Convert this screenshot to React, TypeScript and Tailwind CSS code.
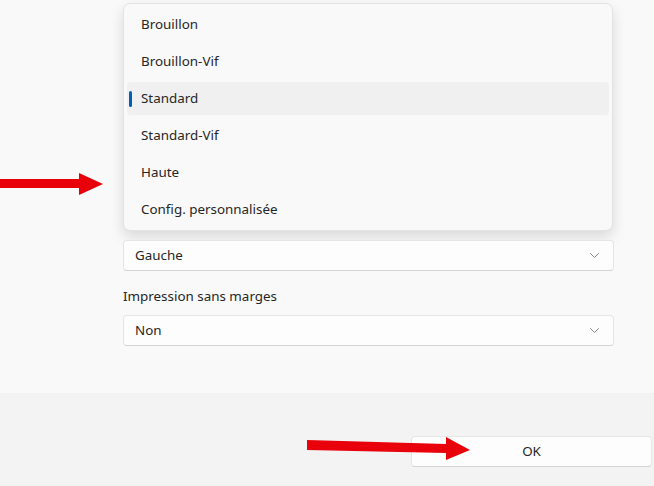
import React from "react";

const qualities = [
  "Brouillon",
  "Brouillon-Vif",
  "Standard",
  "Standard-Vif",
  "Haute",
  "Config. personnalisée",
];

const Chevron = () => (
  <svg width="9" height="5" viewBox="0 0 9 5" fill="none" className="text-[#7a7a7a]">
    <path d="M0.5 0.5l4 4 4-4" stroke="currentColor" strokeWidth="0.9" strokeLinecap="round" strokeLinejoin="round" />
  </svg>
);

const Select = ({ value }: { value: string }) => (
  <div className="flex items-center justify-between h-[31px] pl-[11px] pr-[14px] bg-[#fdfdfd] border border-[#e5e5e5] border-b-[#d4d4d4] rounded-[4px]">
    <span>{value}</span>
    <Chevron />
  </div>
);

const App = () => {
  const selected = "Standard";

  return (
    <div className="relative w-[654px] h-[486px] overflow-hidden flex flex-col font-['Noto_Sans',sans-serif] text-[13.4px] text-[#262626]">
      {/* Settings body */}
      <div className="h-[393px] bg-[#f9f9f9] pl-[123px] pr-[40px] pt-[3px] flex flex-col">
        {/* Open quality list */}
        <div className="w-[490px] bg-[#f9f9f9] border border-[#e3e3e3] rounded-[7px] py-[2px] shadow-[0_6px_14px_rgba(0,0,0,0.13)]">
          {qualities.map((q) => (
            <div key={q} className="h-[37px] px-[3px] py-[2px]">
              <div
                className={`relative h-full flex items-center pl-[14px] rounded-[4px] ${
                  q === selected ? "bg-[#f0f0f0]" : ""
                }`}
              >
                {q === selected && (
                  <span className="absolute left-[2px] top-[9px] w-[3px] h-[16px] rounded-full bg-[#005fb8]" />
                )}
                {q}
              </div>
            </div>
          ))}
        </div>

        <div className="mt-[9px]">
          <Select value="Gauche" />
        </div>

        <p className="mt-[15px] leading-[20px]">Impression sans marges</p>

        <div className="mt-[9px]">
          <Select value="Non" />
        </div>
      </div>

      {/* Footer */}
      <div className="flex-1 bg-[#f3f3f3] flex justify-end items-start pt-[43px] pr-[2px]">
        <button className="w-[241px] h-[31px] bg-[#fdfdfd] border border-[#e5e5e5] border-b-[#d4d4d4] rounded-[4px]">
          OK
        </button>
      </div>

      {/* Red pointer arrows */}
      <svg className="absolute inset-0 pointer-events-none" width="654" height="486" viewBox="0 0 654 486">
        <polygon points="0,179 79,179 79,173 103,184 79,195 79,188 0,188" fill="#e8000b" />
        <polygon points="307,440 446,444 446,437 470,450 446,460 446,453 307,450" fill="#e8000b" />
      </svg>
    </div>
  );
};

export default App;
